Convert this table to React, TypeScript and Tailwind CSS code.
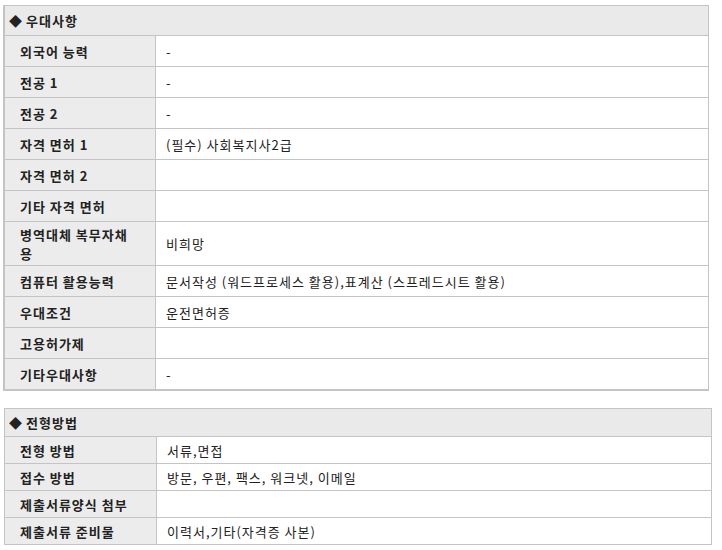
const prefRows: { label: string; value: string; tall?: boolean }[] = [
  { label: "외국어 능력", value: "-" },
  { label: "전공 1", value: "-" },
  { label: "전공 2", value: "-" },
  { label: "자격 면허 1", value: "(필수) 사회복지사2급" },
  { label: "자격 면허 2", value: "" },
  { label: "기타 자격 면허", value: "" },
  { label: "병역대체 복무자채용", value: "비희망", tall: true },
  { label: "컴퓨터 활용능력", value: "문서작성 (워드프로세스 활용),표계산 (스프레드시트 활용)" },
  { label: "우대조건", value: "운전면허증" },
  { label: "고용허가제", value: "" },
  { label: "기타우대사항", value: "-" },
];

const selectRows = [
  { label: "전형 방법", value: "서류,면접" },
  { label: "접수 방법", value: "방문, 우편, 팩스, 워크넷, 이메일" },
  { label: "제출서류양식 첨부", value: "" },
  { label: "제출서류 준비물", value: "이력서,기타(자격증 사본)" },
];

function SectionHead({ title, h }: { title: string; h: string }) {
  return (
    <div className={`flex items-center ${h} bg-[#eaeaea] border-b border-[#c4c4c4] pl-[4px] font-bold`}>
      <span className="text-[13px] mr-[4px] tracking-normal">◆</span>
      <span>{title}</span>
    </div>
  );
}

export default function App() {
  return (
    <div
      className="w-[722px] h-[550px] bg-white text-[13px] leading-[19px] tracking-[1px] text-[#222]"
      style={{ fontFamily: '"Noto Sans CJK KR", "Noto Sans", sans-serif' }}
    >
      <div className="pt-[5px] pl-[3px]">
        <div className="w-[706px] border border-[#c4c4c4] border-l-2 border-b-2">
          <SectionHead title="우대사항" h="h-[30px]" />
          {prefRows.map((r) => (
            <div key={r.label} className="flex border-b border-[#c4c4c4] last:border-b-0">
              <div
                className={`w-[151px] shrink-0 bg-[#ececec] border-r border-[#c4c4c4] pl-[15px] pr-[20px] font-bold flex items-center ${
                  r.tall ? "h-[43px]" : "h-[30px]"
                }`}
              >
                {r.label}
              </div>
              <div className="flex-1 flex items-center pl-[10px]">{r.value}</div>
            </div>
          ))}
        </div>
      </div>

      <div className="pt-[17px] pl-[4px]">
        <div className="w-[708px] border border-[#c4c4c4]">
          <SectionHead title="전형방법" h="h-[28px]" />
          {selectRows.map((r) => (
            <div key={r.label} className="flex border-b border-[#c4c4c4] last:border-b-0">
              <div className="w-[152px] shrink-0 h-[26px] bg-[#ececec] border-r border-[#c4c4c4] pl-[15px] font-bold flex items-center">
                {r.label}
              </div>
              <div className="flex-1 flex items-center pl-[10px]">{r.value}</div>
            </div>
          ))}
        </div>
      </div>
    </div>
  );
}
